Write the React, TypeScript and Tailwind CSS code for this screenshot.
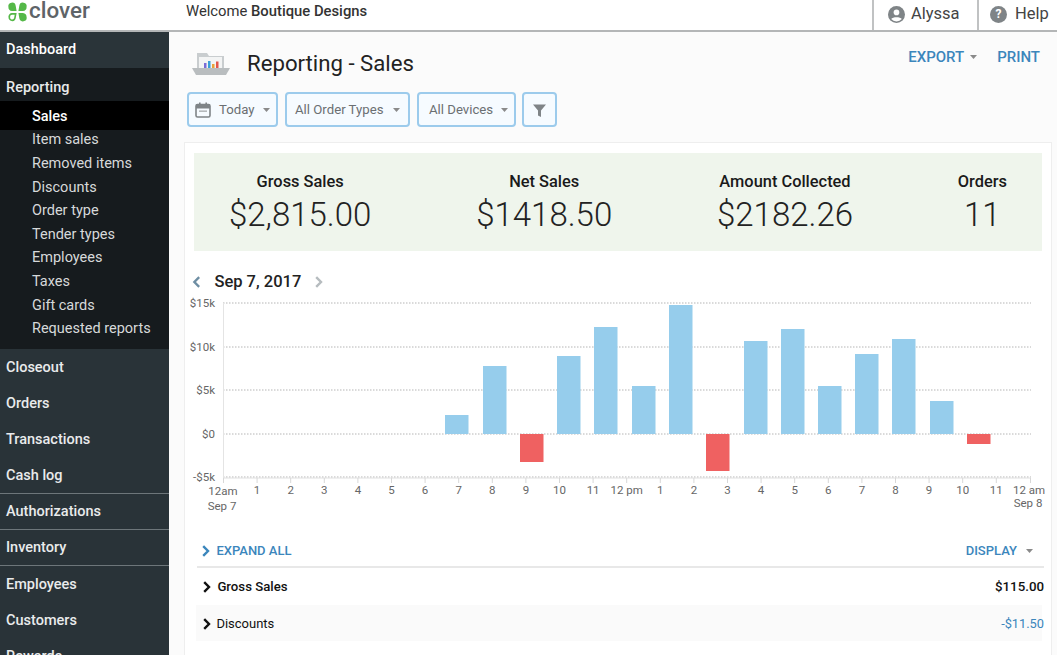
import React from "react";

const sub = ["Item sales", "Removed items", "Discounts", "Order type", "Tender types", "Employees", "Taxes", "Gift cards", "Requested reports"];
const lower: [string, boolean][] = [["Closeout", false], ["Orders", false], ["Transactions", false], ["Cash log", true], ["Authorizations", true], ["Inventory", true], ["Employees", false], ["Customers", false], ["Rewards", false]];

const bars: [number, number, number, boolean][] = [
  [445, 415, 434, false], [483, 366, 434, false], [520, 434, 462, true], [557, 356, 434, false], [594, 327, 434, false],
  [632, 386, 434, false], [669, 305, 434, false], [706, 434, 471, true], [744, 341, 434, false], [781, 329, 434, false],
  [818, 386, 434, false], [855, 354, 434, false], [892, 339, 434, false], [930, 401, 434, false], [967, 434, 444, true],
];
const hours = ["1", "2", "3", "4", "5", "6", "7", "8", "9", "10", "11", "12 pm", "1", "2", "3", "4", "5", "6", "7", "8", "9", "10", "11"];
const yLabels: [string, number][] = [["$15k", 303], ["$10k", 347], ["$5k", 390], ["$0", 434], ["-$5k", 477]];

function Caret({ color = "#8a8a8a" }: { color?: string }) {
  return (
    <svg width="7" height="4" viewBox="0 0 7 4" className="shrink-0">
      <path d="M0 0h7L3.500 4z" fill={color} />
    </svg>
  );
}

function Chevron({ color = "#111", size = 10, left = false, sw = 2 }: { color?: string; size?: number; left?: boolean; sw?: number }) {
  return (
    <svg width={size * 0.7} height={size} viewBox="0 0 7 10" className="shrink-0">
      <path d={left ? "M6 1L2 5l4 4" : "M1 1l4 4-4 4"} fill="none" stroke={color} strokeWidth={sw} />
    </svg>
  );
}

function Logo() {
  return (
    <div className="flex items-center h-[22px]">
      <svg width="21" height="20" viewBox="0 0 22 22" className="shrink-0">
        <path d="M1 5.500a4 4 0 0 1 8 -1.500 L10 10 H5 a4.500 4.500 0 0 1 -4 -4.500z" fill="#55b848" />
        <path d="M21 5.500a4 4 0 0 0 -8 -1.500 L12 10 h5 a4.500 4.500 0 0 0 4 -4.500z" fill="#55b848" />
        <path d="M21 16.500a4 4 0 0 1 -8 1.500 L12 12 h5 a4.500 4.500 0 0 1 4 4.500z" fill="#55b848" />
        <path d="M2 16.500a3 3 0 0 0 6.200 1 L9 13 H5 a3.200 3.200 0 0 0 -3 3.500z" fill="none" stroke="#55b848" strokeWidth="1.800" />
      </svg>
      <span className="ml-[1px] text-[#5e6468] text-[22.4px] font-medium leading-none -mt-[3px]">clover</span>
    </div>
  );
}

function FolderIcon() {
  return (
    <svg width="38" height="28" viewBox="0 0 38 28" className="shrink-0">
      <path d="M5 4h10l2 3h15v12H5z" fill="#c9cdcf" />
      <rect x="7" y="8" width="23" height="11" fill="#f3f4f4" />
      <rect x="12" y="14" width="2.500" height="5" fill="#7a6cd6" />
      <rect x="16" y="12" width="2.500" height="7" fill="#3aa0d8" />
      <rect x="20" y="15" width="2.500" height="4" fill="#e9a23b" />
      <rect x="24" y="12.500" width="2.500" height="6.500" fill="#e2574c" />
      <path d="M0 19h38l-4 7H4z" fill="#b9bdbf" />
    </svg>
  );
}

function FilterBtn({ children, w }: { children: React.ReactNode; w: string }) {
  return (
    <div className={`${w} h-[35px] flex items-center pt-[1px] rounded-[4px] border-2 border-[#9ccbec] bg-[#f6fbff] text-[#6b6f72] text-[13.2px]`}>
      {children}
    </div>
  );
}

function Stat({ label, value }: { label: string; value: string }) {
  return (
    <div className="flex flex-col items-center">
      <div className="text-[16.4px] font-medium text-[#1a1a1a] leading-[20px]">{label}</div>
      <div className="text-[33px] font-light text-[#222] leading-[42px] mt-[2px]">{value}</div>
    </div>
  );
}

function Chart() {
  const ox = 184;
  const oy = 296;
  const labelCls = "#666666";
  return (
    <svg width="868" height="220" viewBox={`${ox} ${oy} 868 220`} className="block">
      {yLabels.map(([t, y]) => (
        <g key={t}>
          <line x1="223" x2="1031" y1={y} y2={y} stroke="#b5b5b5" strokeWidth="1" strokeDasharray="1.500 1.500" />
          <text x="215" y={y + 4} textAnchor="end" fontSize="11.500" fill={labelCls}>{t}</text>
        </g>
      ))}
      <line x1="223.500" x2="223.500" y1="303" y2="478" stroke="#e4e4e4" />
      <line x1="223" x2="1031" y1="478" y2="478" stroke="#e0e0e0" />
      {bars.map(([x, t, b, red]) => (
        <rect key={x} x={x} y={t} width="23.500" height={b - t} fill={red ? "#ef6161" : "#96cdec"} />
      ))}
      {hours.map((h, i) => {
        const x = 223.5 + (i + 1) * 33.6;
        return (
          <g key={i}>
            <line x1={x} x2={x} y1="478" y2="483" stroke="#d8d8d8" />
            <text x={x} y="494" textAnchor="middle" fontSize="11.500" fill={labelCls}>{h}</text>
          </g>
        );
      })}
      <line x1="223.500" x2="223.500" y1="478" y2="483" stroke="#d8d8d8" />
      <line x1="1030.500" x2="1030.500" y1="478" y2="483" stroke="#d8d8d8" />
      <text x="223" y="495" textAnchor="middle" fontSize="11.500" fill={labelCls}>12am</text>
      <text x="222" y="510" textAnchor="middle" fontSize="11.500" fill={labelCls}>Sep 7</text>
      <text x="1029" y="494" textAnchor="middle" fontSize="11.500" fill={labelCls}>12 am</text>
      <text x="1028" y="507" textAnchor="middle" fontSize="11.500" fill={labelCls}>Sep 8</text>
    </svg>
  );
}

export default function App() {
  return (
    <div className="w-[1057px] h-[655px] overflow-hidden flex flex-col bg-[#fbfbfb]" style={{ fontFamily: "Roboto, sans-serif" }}>
      {/* top bar */}
      <header className="h-[32px] shrink-0 flex bg-white border-b-2 border-[#b4b6b7]">
        <div className="w-[186px] pl-[7px] pt-[1px]"><Logo /></div>
        <div className="flex-1 text-[14.8px] text-[#333] leading-[23px]">
          Welcome <span className="font-medium">Boutique Designs</span>
        </div>
        <div className="w-[105px] -mt-[2px] flex items-center border-l-2 border-[#c0c2c3] pl-[14px] gap-[6px]">
          <svg width="17" height="17" viewBox="0 0 24 24" className="shrink-0">
            <circle cx="12" cy="12" r="12" fill="#7f8487" />
            <circle cx="12" cy="9" r="4" fill="#fff" />
            <path d="M4.500 18.500c2-3.500 13-3.500 15 0a10 10 0 0 1 -15 0z" fill="#fff" />
          </svg>
          <span className="text-[16.5px] text-[#444]">Alyssa</span>
        </div>
        <div className="w-[80px] -mt-[2px] flex items-center border-l-2 border-[#c0c2c3] pl-[11px] gap-[8px]">
          <span className="w-[17px] h-[17px] rounded-full bg-[#7f8487] text-white text-[12px] font-bold flex items-center justify-center">?</span>
          <span className="text-[16.5px] text-[#444]">Help</span>
        </div>
      </header>

      <div className="flex flex-1 min-h-0">
        {/* sidebar */}
        <aside className="w-[169px] shrink-0 bg-[#293338] text-white text-[14.5px] font-medium">
          <div className="h-[36px] flex items-center pl-[6px] bg-[#2a3439]">Dashboard</div>
          <div className="h-[281px] bg-[#161b1e] flex flex-col">
            <div className="h-[33px] shrink-0 flex items-center pl-[6px] pt-[6px] text-[#e8eaeb]">Reporting</div>
            <div className="h-[29px] shrink-0 flex items-center pl-[32px] pt-[2px] bg-black">Sales</div>
            <div className="-mt-[1.5px] flex flex-col">
              {sub.map((s) => (
                <div key={s} className="h-[23.6px] shrink-0 flex items-center pl-[32px] font-normal text-[#d6d9da]">{s}</div>
              ))}
            </div>
          </div>
          {lower.map(([s, line]) => (
            <div key={s} className={`h-[36.2px] flex items-center pl-[6px] pt-[1px] text-[#e9ebec] ${line ? "border-b border-[#6d767a]" : ""}`}>{s}</div>
          ))}
        </aside>

        {/* main */}
        <main className="flex-1 min-w-0 pl-[15px] pr-[5px]">
          <div className="h-[60px] flex items-start">
            <div className="flex items-center mt-[17px] ml-[8px]">
              <FolderIcon />
              <h1 className="ml-[17px] text-[22.2px] text-[#222] leading-[28px]">Reporting - Sales</h1>
            </div>
            <div className="ml-auto mt-[16px] mr-[12px] flex items-center text-[#3b86bc] text-[15px] font-medium leading-[18px]">
              EXPORT
              <span className="ml-[6px] mr-[20px]"><Caret /></span>
              PRINT
            </div>
          </div>

          <div className="flex ml-[3px] gap-[7px]">
            <FilterBtn w="w-[91px]">
              <svg width="16" height="16" viewBox="0 0 16 16" className="ml-[6px] shrink-0">
                <rect x="1" y="2.500" width="14" height="12.500" rx="1.500" fill="none" stroke="#7f8487" strokeWidth="1.600" />
                <rect x="1" y="2.500" width="14" height="4" fill="#7f8487" />
                <rect x="4" y="0.500" width="1.600" height="3" fill="#7f8487" />
                <rect x="10.400" y="0.500" width="1.600" height="3" fill="#7f8487" />
                <rect x="4" y="8.500" width="8" height="1.300" fill="#a5a9ab" />
              </svg>
              <span className="ml-[8px]">Today</span>
              <span className="ml-auto mr-[6px]"><Caret /></span>
            </FilterBtn>
            <FilterBtn w="w-[125px]">
              <span className="ml-[8px] whitespace-nowrap">All Order Types</span>
              <span className="ml-auto mr-[8px]"><Caret /></span>
            </FilterBtn>
            <FilterBtn w="w-[99px]">
              <span className="ml-[10px] whitespace-nowrap">All Devices</span>
              <span className="ml-auto mr-[6px]"><Caret /></span>
            </FilterBtn>
            <div className="-ml-[1px]">
              <FilterBtn w="w-[35px]">
                <svg width="13" height="13" viewBox="0 0 13 13" className="mx-auto">
                  <path d="M0 0.500h13L8 6.500V13L5 11.500V6.500z" fill="#7f8487" />
                </svg>
              </FilterBtn>
            </div>
          </div>

          {/* card */}
          <section className="mt-[15px] h-[600px] bg-white border border-[#eeeeee] pt-[10px] px-[9px]">
            <div className="h-[98px] bg-[#eff5ec] flex justify-between px-[35px] pt-[19px]">
              <Stat label="Gross Sales" value="$2,815.00" />
              <Stat label="Net Sales" value="$1418.50" />
              <Stat label="Amount Collected" value="$2182.26" />
              <Stat label="Orders" value="11" />
            </div>

            <div className="h-[44px] pt-[18px] flex items-center">
              <span className="-ml-[2px]"><Chevron left color="#6e8ea3" size={12} /></span>
              <span className="ml-[14px] text-[16.5px] font-medium text-[#222]">Sep 7, 2017</span>
              <span className="ml-[14px]"><Chevron color="#b6bcbf" size={12} /></span>
            </div>

            <div className="-ml-[10px] mt-[1px]"><Chart /></div>

            <div className="h-[50px] flex items-center pt-[19px] ml-[8px] mr-[6px] text-[#3b86bc] font-medium text-[13px]">
              <Chevron color="#3b86bc" size={12} />
              <span className="ml-[6px]">EXPAND ALL</span>
              <span className="ml-auto mr-[3px]">DISPLAY</span>
              <span className="ml-[6px] mr-[3px]"><Caret /></span>
            </div>
            <div className="border-t-2 border-[#e8e8e8] ml-[3px] -mr-[2px] h-[39px] flex items-center font-medium text-[13.2px] text-[#111]">
              <span className="ml-[6px]"><Chevron size={12} /></span>
              <span className="ml-[6px]">Gross Sales</span>
              <span className="ml-auto text-[13.3px]">$115.00</span>
            </div>
            <div className="bg-[#fafafa] ml-[2px] h-[36px] flex items-center pt-[2px] text-[13px] text-[#111]">
              <span className="ml-[7px]"><Chevron size={12} /></span>
              <span className="ml-[5px]">Discounts</span>
              <span className="ml-auto -mr-[2px] text-[#3b86bc] text-[12.8px]">-$11.50</span>
            </div>
            <div className="h-[36px] flex items-center justify-end pt-[26px] text-[#3b86bc] text-[13px] mr-[-1px]">-$11.50</div>
          </section>
        </main>
      </div>
    </div>
  );
}
